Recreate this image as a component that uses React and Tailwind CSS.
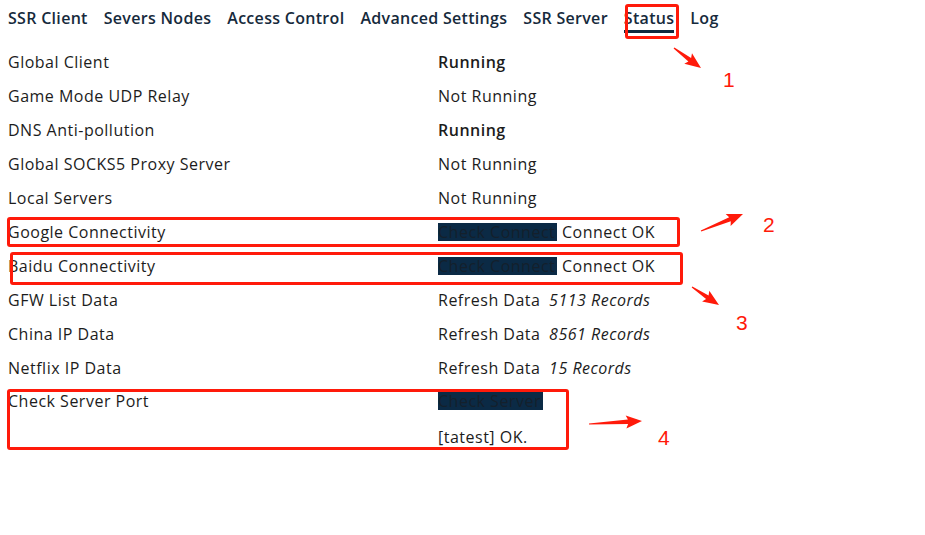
import React from 'react';

const tabs = ['SSR Client', 'Severs Nodes', 'Access Control', 'Advanced Settings', 'SSR Server', 'Status', 'Log'];

const rows = [
  { label: 'Global Client', value: <span className="font-semibold">Running</span> },
  { label: 'Game Mode UDP Relay', value: 'Not Running' },
  { label: 'DNS Anti-pollution', value: <span className="font-semibold">Running</span> },
  { label: 'Global SOCKS5 Proxy Server', value: 'Not Running' },
  { label: 'Local Servers', value: 'Not Running' },
  { label: 'Google Connectivity', value: <><Btn>Check Connect</Btn> Connect OK</> },
  { label: 'Baidu Connectivity', value: <><Btn>Check Connect</Btn> Connect OK</> },
  { label: 'GFW List Data', value: <>Refresh Data <i className="ml-1">5113 Records</i></> },
  { label: 'China IP Data', value: <>Refresh Data <i className="ml-1">8561 Records</i></> },
  { label: 'Netflix IP Data', value: <>Refresh Data <i className="ml-1">15 Records</i></> },
];

function Btn({ children }) {
  return (
    <span className="inline-block bg-[#0b2a45] text-[#14202c] leading-[18px] h-[18px] pr-[2px]">{children}</span>
  );
}

// tapered red arrow, computed from tail and tip
function Arrow({ x1, y1, x2, y2 }) {
  const dx = x2 - x1;
  const dy = y2 - y1;
  const len = Math.hypot(dx, dy);
  const ux = dx / len;
  const uy = dy / len;
  const nx = -uy;
  const ny = ux;
  const head = 14;
  const bx = x2 - ux * head;
  const by = y2 - uy * head;
  const p = (x, y) => `${x.toFixed(1)},${y.toFixed(1)}`;
  const pts = [
    p(x1 + nx * 0.6, y1 + ny * 0.6),
    p(bx + nx * 2.2, by + ny * 2.2),
    p(bx + nx * 6.5 - ux * 2, by + ny * 6.5 - uy * 2),
    p(x2, y2),
    p(bx - nx * 6.5 - ux * 2, by - ny * 6.5 - uy * 2),
    p(bx - nx * 2.2, by - ny * 2.2),
    p(x1 - nx * 0.6, y1 - ny * 0.6),
  ].join(' ');
  return <polygon points={pts} fill="#ff1a0a" />;
}

function Box({ className }) {
  return <div className={`absolute border-[3px] border-[#ff1a0a] rounded-[3px] pointer-events-none ${className}`} />;
}

function Num({ className, children }) {
  return (
    <div className={`absolute text-[21px] leading-[24px] text-[#ff1a0a] ${className}`} style={{ fontFamily: '"Liberation Sans", sans-serif' }}>
      {children}
    </div>
  );
}

export default function App() {
  return (
    <div className="relative w-[925px] h-[535px] bg-white text-[16px] tracking-[0.5px] text-[#1c1c1c] overflow-hidden" style={{ fontFamily: '"Open Sans", "Liberation Sans", sans-serif' }}>
      <div className="flex gap-4 px-2 h-[36px] items-start pt-[6px]">
        {tabs.map((t) => (
          <div
            key={t}
            className={`font-semibold tracking-[0.3px] leading-[24px] text-[#162a3c] ${t === 'Status' ? 'border-b-[3px] border-[#0f2a40]' : ''}`}
          >
            {t}
          </div>
        ))}
      </div>
      <div className="mt-[9px]">
        {rows.map((r) => (
          <div key={r.label} className="flex h-[34px] items-center px-2">
            <div className="w-[430px]">{r.label}</div>
            <div>{r.value}</div>
          </div>
        ))}
        <div className="flex px-2 pt-[7px]">
          <div className="w-[430px] leading-[18px]">Check Server Port</div>
          <div className="flex flex-col leading-[18px]">
            <div><Btn>Check Server</Btn></div>
            <div className="mt-[18px]">[tatest] OK.</div>
          </div>
        </div>
      </div>

      {/* annotation overlay */}
      <Box className="left-[625px] top-[4px] w-[54px] h-[35px]" />
      <Box className="left-[7px] top-[217px] w-[673px] h-[30px]" />
      <Box className="left-[10px] top-[252px] w-[673px] h-[33px]" />
      <Box className="left-[7px] top-[389px] w-[562px] h-[61px]" />
      <svg className="absolute left-0 top-0 pointer-events-none" width="925" height="535">
        <Arrow x1={674} y1={48} x2={701} y2={68} />
        <Arrow x1={701} y1={231} x2={743} y2={214} />
        <Arrow x1={692} y1={287} x2={719} y2={305} />
        <Arrow x1={589} y1={424} x2={642} y2={421} />
      </svg>
      <Num className="left-[723px] top-[68px]">1</Num>
      <Num className="left-[763px] top-[213px]">2</Num>
      <Num className="left-[736px] top-[311px]">3</Num>
      <Num className="left-[658px] top-[426px]">4</Num>
    </div>
  );
}
